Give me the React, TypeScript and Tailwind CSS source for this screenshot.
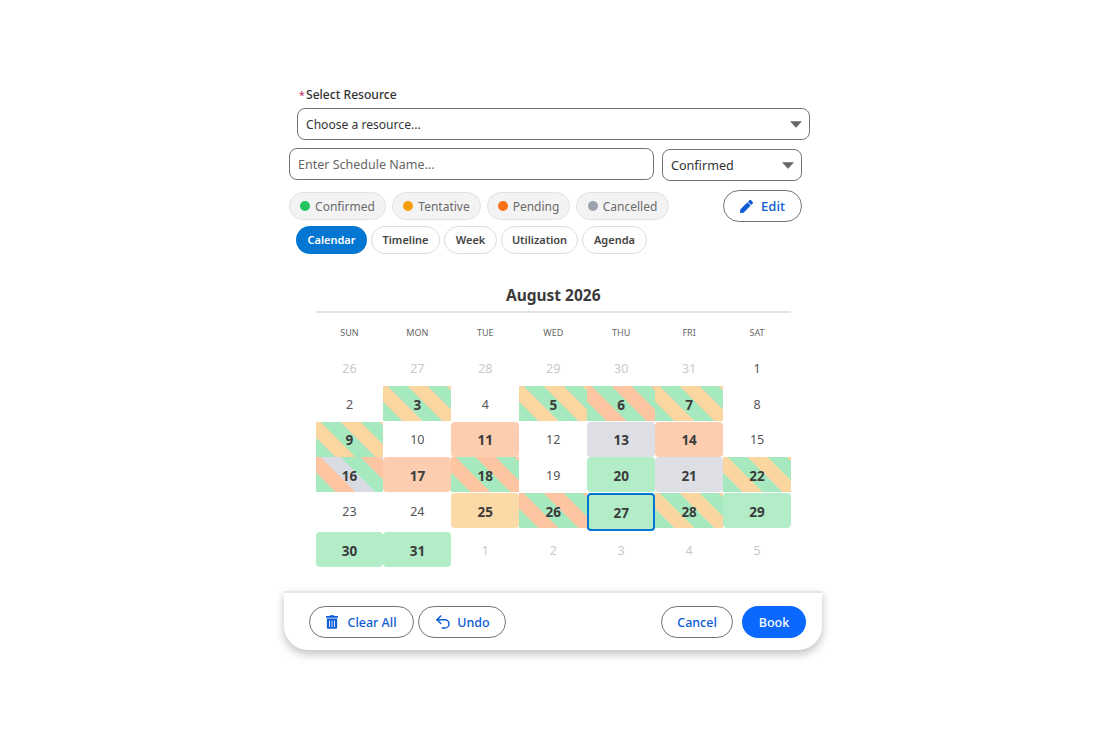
import { FaPen, FaTrashAlt } from "react-icons/fa";
import { Undo2 } from "lucide-react";

const BOLD = "font-bold text-[13.5px] text-[#3b3b3b]";
const GREEN_ORANGE = `bg-[repeating-linear-gradient(45deg,#a6e9be_0_14px,#fbd6a0_14px_28px)] ${BOLD}`;
const GREEN_SALMON = `bg-[repeating-linear-gradient(45deg,#a6e9be_0_14px,#fdc5a2_14px_28px)] ${BOLD}`;
const THREE_WAY = `bg-[repeating-linear-gradient(45deg,#a6e9be_0_14px,#fdc5a2_14px_28px,#d8dbe2_28px_42px)] ${BOLD}`;
const GREEN = `bg-[#b2edc8] rounded ${BOLD}`;
const ORANGE = `bg-[#fcdaa8] rounded ${BOLD}`;
const SALMON = `bg-[#fdcdb0] rounded ${BOLD}`;
const GREY = `bg-[#dddfe4] rounded ${BOLD}`;
const PLAIN = "text-[12.5px] text-[#555555]";
const MUTED = "text-[12.5px] text-[#c9c9c9]";

const days: Array<{ n: number; cls: string; selected?: boolean }> = [
  { n: 26, cls: MUTED }, { n: 27, cls: MUTED }, { n: 28, cls: MUTED }, { n: 29, cls: MUTED }, { n: 30, cls: MUTED }, { n: 31, cls: MUTED }, { n: 1, cls: PLAIN },
  { n: 2, cls: PLAIN }, { n: 3, cls: GREEN_ORANGE }, { n: 4, cls: PLAIN }, { n: 5, cls: GREEN_ORANGE }, { n: 6, cls: GREEN_SALMON }, { n: 7, cls: GREEN_ORANGE }, { n: 8, cls: PLAIN },
  { n: 9, cls: GREEN_ORANGE }, { n: 10, cls: PLAIN }, { n: 11, cls: SALMON }, { n: 12, cls: PLAIN }, { n: 13, cls: GREY }, { n: 14, cls: SALMON }, { n: 15, cls: PLAIN },
  { n: 16, cls: THREE_WAY }, { n: 17, cls: SALMON }, { n: 18, cls: GREEN_SALMON }, { n: 19, cls: PLAIN }, { n: 20, cls: GREEN }, { n: 21, cls: GREY }, { n: 22, cls: GREEN_ORANGE },
  { n: 23, cls: PLAIN }, { n: 24, cls: PLAIN }, { n: 25, cls: ORANGE }, { n: 26, cls: GREEN_SALMON }, { n: 27, cls: GREEN, selected: true }, { n: 28, cls: GREEN_ORANGE }, { n: 29, cls: GREEN },
  { n: 30, cls: GREEN }, { n: 31, cls: GREEN }, { n: 1, cls: MUTED }, { n: 2, cls: MUTED }, { n: 3, cls: MUTED }, { n: 4, cls: MUTED }, { n: 5, cls: MUTED },
];

const legend = [
  { label: "Confirmed", dot: "bg-[#22c55e]", w: "w-[97px]" },
  { label: "Tentative", dot: "bg-[#f59e0b]", w: "w-[89px]" },
  { label: "Pending", dot: "bg-[#f97316]", w: "w-[83px]" },
  { label: "Cancelled", dot: "bg-[#9ca3af]", w: "w-[93px]" },
];

const tabs = [
  { label: "Calendar", w: "w-[71px]", active: true },
  { label: "Timeline", w: "w-[69px]" },
  { label: "Week", w: "w-[53px]" },
  { label: "Utilization", w: "w-[77px]" },
  { label: "Agenda", w: "w-[65px]" },
];

function Caret() {
  return (
    <svg width="12" height="7" viewBox="0 0 12 7" className="shrink-0">
      <path d="M0.5 0.5h11L6 6.5z" fill="#666666" stroke="#666666" strokeWidth="0.5" strokeLinejoin="round" />
    </svg>
  );
}

export default function App() {
  return (
    <div className="min-h-[729px] bg-white flex justify-center font-['Noto_Sans','Open_Sans',sans-serif]">
      <div className="w-[538px] pt-[87px]">
        <div className="ml-[15px] h-[14px] pt-[2px] flex items-center text-[12.1px] leading-none font-medium text-[#333333]">
          <span className="w-[7px] text-[10.5px] text-[#bf3a6e]">*</span>Select Resource
        </div>
        <div className="ml-[13px] mt-[7px] w-[513px] h-[32px] border border-[#747474] rounded-lg flex items-center justify-between pl-[8px] pr-[7px] text-[12.1px] text-[#333333]">
          <span className="pt-[2px]">Choose a resource...</span>
          <Caret />
        </div>
        <div className="ml-[5px] mt-[8px] w-[513px] flex gap-[8px] items-start">
          <div className="w-[365px] h-[32px] pt-[2px] border border-[#747474] rounded-lg flex items-center pl-[8px] text-[12.5px] text-[#666666]">
            Enter Schedule Name...
          </div>
          <div className="w-[140px] h-[32px] mt-[1px] border border-[#747474] rounded-lg flex items-center justify-between pl-[8px] pr-[7px] text-[12.6px] text-[#333333]">
            <span className="pt-[2px]">Confirmed</span>
            <Caret />
          </div>
        </div>
        <div className="ml-[5px] mt-[9px] w-[513px] flex items-center justify-between">
          <div className="flex gap-[6px]">
            {legend.map((l) => (
              <div key={l.label} className={`${l.w} h-[28px] bg-[#f3f3f3] border border-[#e0e2ea] rounded-[14px] flex items-center justify-center gap-[5px] text-[12px] text-[#6b6b6b]`}>
                <span className={`w-[10px] h-[10px] rounded-full ${l.dot}`} />
                <span className="pt-[2px]">{l.label}</span>
              </div>
            ))}
          </div>
          <button className="w-[79px] h-[32px] bg-white border border-[#747474] rounded-2xl flex items-center justify-center gap-[8px] text-[13px] font-medium text-[#0b5cd5]">
            <FaPen className="w-[13px] h-[13px]" />
            <span className="pt-[2px]">Edit</span>
          </button>
        </div>
        <div className="ml-[12px] mt-[4px] flex gap-[4px]">
          {tabs.map((t) => (
            <div
              key={t.label}
              className={`${t.w} h-[27.5px] rounded-[14px] flex items-center justify-center text-[11px] font-semibold ${t.active ? "bg-[#0176d3] text-white" : "bg-white border border-[#dddddd] text-[#444444]"}`}
            >
              {t.label}
            </div>
          ))}
        </div>
        <div className="ml-[31.5px] mt-[31px] w-[475.5px]">
          <div className="h-[28px] border-b-2 border-[#e2e2e2] text-center text-[15.5px] leading-[20px] font-bold text-[#3b3b3b]">August 2026</div>
          <div className="grid grid-cols-7 h-[37.8px] pt-[2px] items-center text-center text-[9px] text-[#666666]">
            {["SUN", "MON", "TUE", "WED", "THU", "FRI", "SAT"].map((d) => (
              <div key={d}>{d}</div>
            ))}
          </div>
          <div className="grid grid-cols-7 items-start gap-y-[0.66px]">
            {days.map((d, i) => (
              <div
                key={i}
                className={`flex items-center justify-center pt-[3px] ${d.cls} ${d.selected ? "h-[38.34px] border-2 border-[#0176d3] rounded" : "h-[35px]"}`}
              >
                {d.n}
              </div>
            ))}
          </div>
        </div>
        <div className="mt-[24.5px] h-[58.5px] bg-white border-t-2 border-[#e5e5e5] rounded-b-3xl shadow-[0_4px_10px_rgba(0,0,0,0.25)] flex items-center justify-between pl-[25px] pr-[16px] text-[12.5px] font-medium text-[#0b5cd5]">
          <div className="flex gap-[4px]">
            <button className="w-[105px] h-[32px] border border-[#747474] rounded-2xl flex items-center justify-center gap-[9px]">
              <FaTrashAlt className="w-[12px] h-[14px]" />
              <span className="pt-[3px]">Clear All</span>
            </button>
            <button className="w-[88px] h-[32px] border border-[#747474] rounded-2xl flex items-center justify-center gap-[5px]">
              <Undo2 className="w-[18px] h-[18px]" strokeWidth={2} />
              <span className="pt-[3px]">Undo</span>
            </button>
          </div>
          <div className="flex gap-[9px]">
            <button className="w-[72px] h-[32px] pt-[3px] border border-[#747474] rounded-2xl flex items-center justify-center">Cancel</button>
            <button className="w-[64px] h-[32px] pt-[3px] bg-[#0b68ff] text-white rounded-2xl flex items-center justify-center">Book</button>
          </div>
        </div>
      </div>
    </div>
  );
}
